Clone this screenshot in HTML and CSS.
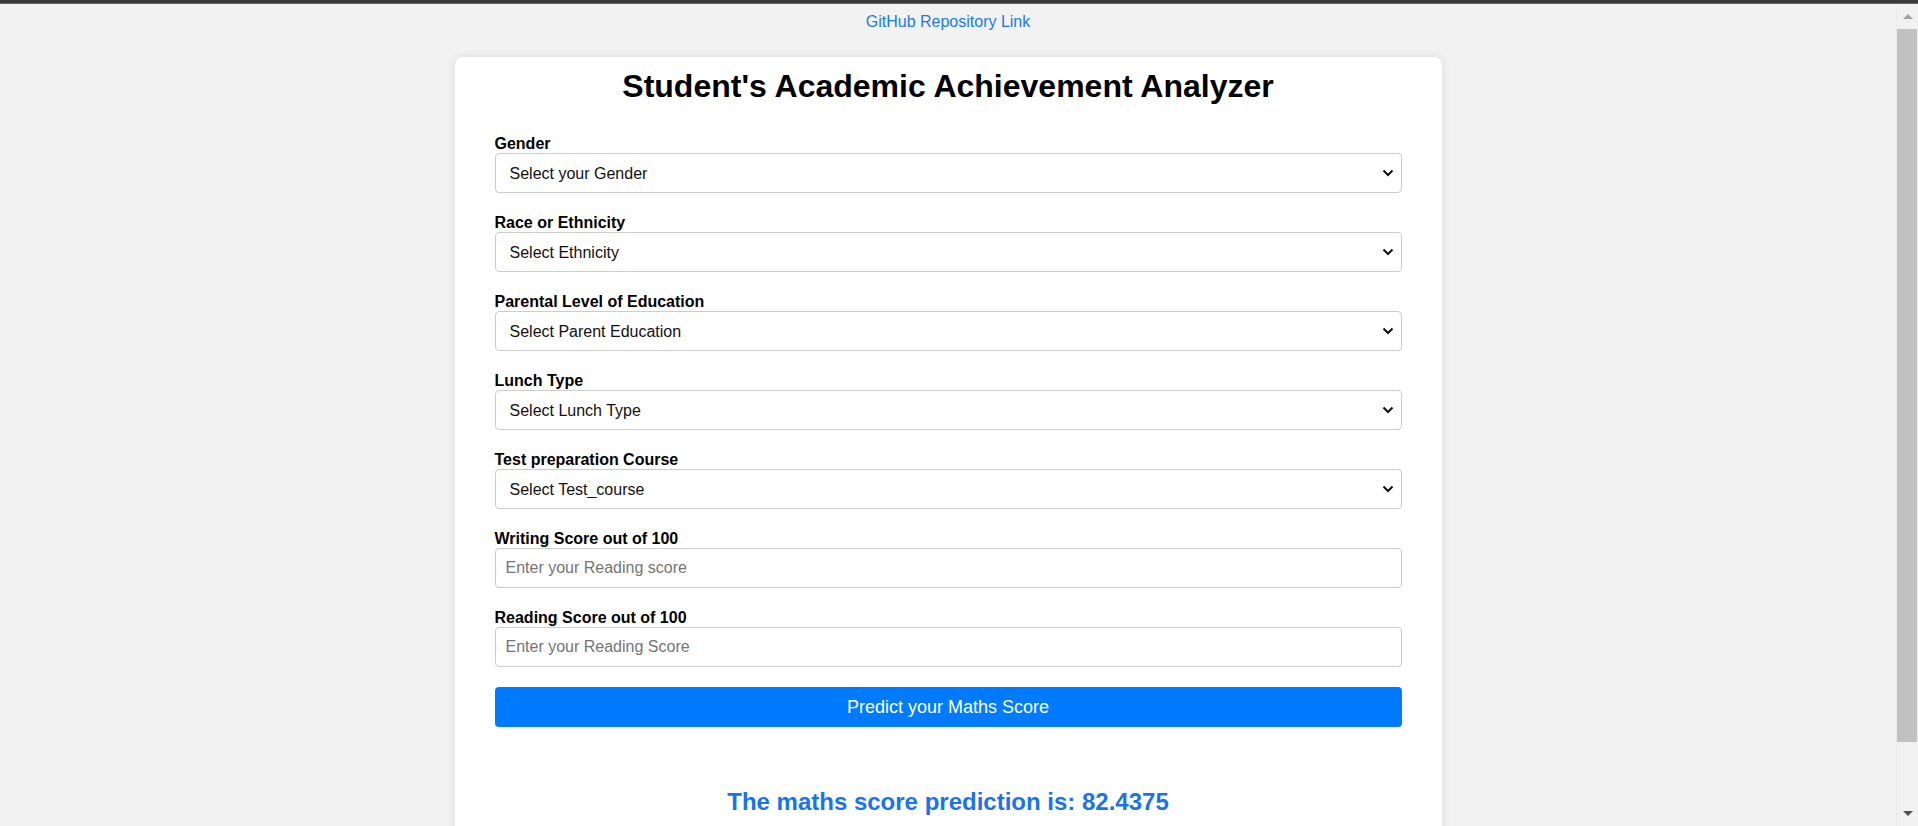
FILE: index.html
```html
<!DOCTYPE html>
<html lang="en">
<head>
<meta charset="utf-8">
<title>Student's Academic Achievement Analyzer</title>
<link rel="stylesheet" href="styles.css">
</head>
<body>
<div class="topbar"></div>
<div class="viewport">
  <main class="page">
    <div class="repo"><a class="repo-link" href="#">GitHub Repository Link</a></div>
    <section class="card">
      <h1 class="title">Student's Academic Achievement Analyzer</h1>
      <form class="form">
        <div class="group">
          <label class="label">Gender</label>
          <div class="select-wrap">
            <select class="control select"><option>Select your Gender</option></select>
            <svg class="chevron" width="12" height="8" viewBox="0 0 12 8"><path d="M1.5 1.5 L6 6 L10.5 1.5" fill="none" stroke="#111" stroke-width="2"/></svg>
          </div>
        </div>
        <div class="group">
          <label class="label">Race or Ethnicity</label>
          <div class="select-wrap">
            <select class="control select"><option>Select Ethnicity</option></select>
            <svg class="chevron" width="12" height="8" viewBox="0 0 12 8"><path d="M1.5 1.5 L6 6 L10.5 1.5" fill="none" stroke="#111" stroke-width="2"/></svg>
          </div>
        </div>
        <div class="group">
          <label class="label">Parental Level of Education</label>
          <div class="select-wrap">
            <select class="control select"><option>Select Parent Education</option></select>
            <svg class="chevron" width="12" height="8" viewBox="0 0 12 8"><path d="M1.5 1.5 L6 6 L10.5 1.5" fill="none" stroke="#111" stroke-width="2"/></svg>
          </div>
        </div>
        <div class="group">
          <label class="label">Lunch Type</label>
          <div class="select-wrap">
            <select class="control select"><option>Select Lunch Type</option></select>
            <svg class="chevron" width="12" height="8" viewBox="0 0 12 8"><path d="M1.5 1.5 L6 6 L10.5 1.5" fill="none" stroke="#111" stroke-width="2"/></svg>
          </div>
        </div>
        <div class="group">
          <label class="label">Test preparation Course</label>
          <div class="select-wrap">
            <select class="control select"><option>Select Test_course</option></select>
            <svg class="chevron" width="12" height="8" viewBox="0 0 12 8"><path d="M1.5 1.5 L6 6 L10.5 1.5" fill="none" stroke="#111" stroke-width="2"/></svg>
          </div>
        </div>
        <div class="group">
          <label class="label">Writing Score out of 100</label>
          <input class="control input" type="text" placeholder="Enter your Reading score">
        </div>
        <div class="group">
          <label class="label">Reading Score out of 100</label>
          <input class="control input" type="text" placeholder="Enter your Reading Score">
        </div>
        <button class="submit" type="button">Predict your Maths Score</button>
      </form>
      <h2 class="result">The maths score prediction is: 82.4375</h2>
    </section>
  </main>
  <div class="scrollbar">
    <div class="sb-btn"><span class="arrow-up"></span></div>
    <div class="sb-thumb"></div>
    <div class="sb-track"></div>
    <div class="sb-btn sb-btn-down"><span class="arrow-down"></span></div>
  </div>
</div>
</body>
</html>
```

FILE: styles.css
```css
* { box-sizing: border-box; }

html, body {
  margin: 0;
  height: 826px;
  overflow: hidden;
}

body {
  background: #f2f2f2;
  font-family: "Liberation Sans", Arial, sans-serif;
  color: #000;
}

.topbar {
  height: 4px;
  background: #3a3a3a;
  border-bottom: 1px solid #6a6a6a;
}

.viewport {
  display: flex;
  height: 822px;
}

.page {
  flex: 1;
  overflow: hidden;
}

.repo {
  text-align: center;
  padding-top: 9px;
  line-height: 18px;
  font-size: 16px;
}

.repo-link {
  color: #1a7be6;
  text-decoration: none;
}

.card {
  width: 987px;
  margin: 26px auto 0;
  padding: 11px 40px 40px;
  background: #fff;
  border-radius: 8px;
  box-shadow: 0 0 10px rgba(0, 0, 0, 0.1);
}

.title {
  margin: 0 0 29px;
  font-size: 32px;
  line-height: 37px;
  font-weight: bold;
  text-align: center;
}

.form {
  display: flex;
  flex-direction: column;
}

.group {
  display: flex;
  flex-direction: column;
  margin-bottom: 20px;
}

.label {
  font-size: 16px;
  font-weight: bold;
  line-height: 19px;
  color: #000;
}

.select-wrap {
  position: relative;
}

.control {
  display: block;
  width: 100%;
  height: 40px;
  border: 1px solid #ccc;
  border-radius: 4px;
  background: #fff;
  font-family: "Liberation Sans", Arial, sans-serif;
  font-size: 16px;
  color: #111;
  outline: none;
  margin: 0;
}

.select {
  appearance: none;
  -webkit-appearance: none;
  padding: 0 30px 0 14px;
}

.input {
  padding: 0 10px;
}

.input::placeholder {
  color: #757575;
}

.chevron {
  position: absolute;
  right: 8px;
  top: 16px;
}

.submit {
  height: 40px;
  border: none;
  border-radius: 4px;
  background: #007bff;
  color: #fff;
  font-family: "Liberation Sans", Arial, sans-serif;
  font-size: 18px;
  cursor: pointer;
}

.result {
  margin: 61px 0 0;
  font-size: 24px;
  line-height: 28px;
  font-weight: bold;
  text-align: center;
  color: #1a73e8;
}

.scrollbar {
  width: 22px;
  display: flex;
  flex-direction: column;
  background: #f1f1f1;
  border-left: 1px solid #ebebeb;
}

.sb-btn {
  height: 25px;
  display: flex;
  align-items: center;
  justify-content: center;
}

.sb-btn-down {
  height: 18px;
  align-items: flex-start;
  padding-top: 3px;
}

.arrow-up {
  width: 0;
  height: 0;
  border-left: 5px solid transparent;
  border-right: 5px solid transparent;
  border-bottom: 5px solid #a3a3a3;
}

.arrow-down {
  width: 0;
  height: 0;
  border-left: 5px solid transparent;
  border-right: 5px solid transparent;
  border-top: 5px solid #505050;
}

.sb-thumb {
  height: 713px;
  margin-right: 1px;
  background: #c1c1c1;
}

.sb-track {
  flex: 1;
}
```
